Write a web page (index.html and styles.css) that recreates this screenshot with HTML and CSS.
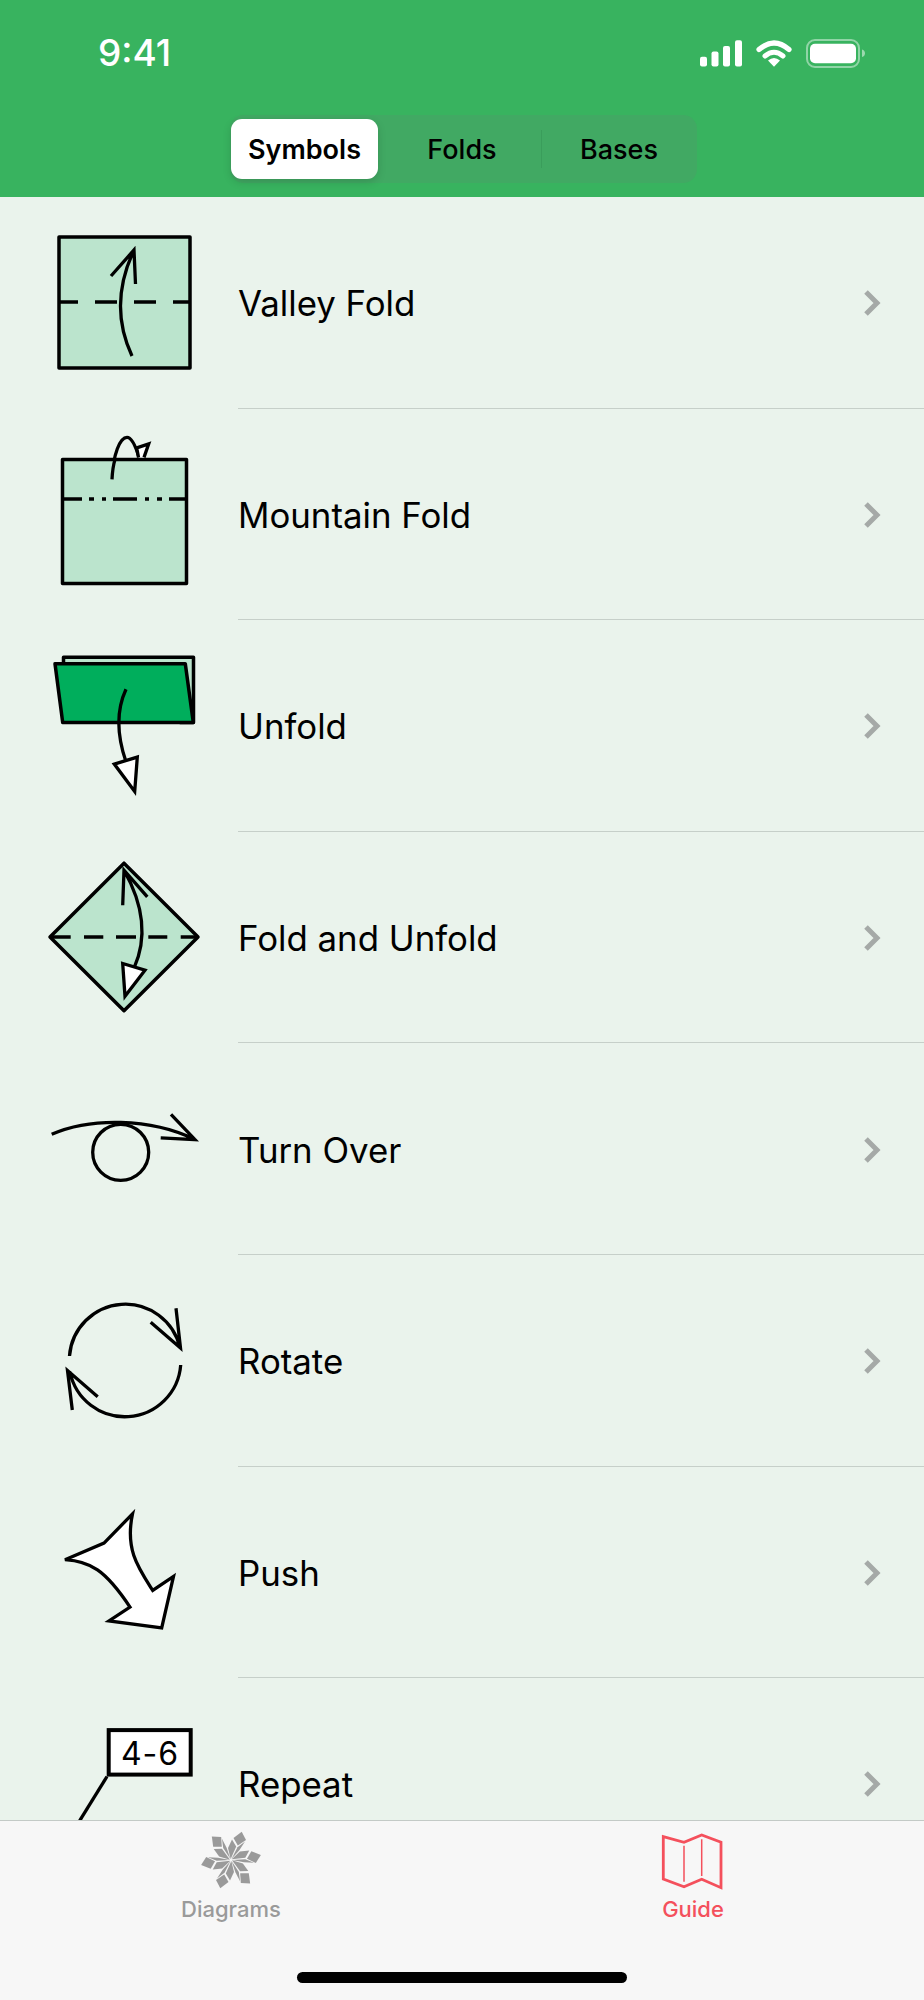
FILE: index.html
```html
<!DOCTYPE html>
<html lang="en">
<head>
    <meta charset="UTF-8">
    <meta name="viewport" content="width=device-width, initial-scale=1.0">
    <title>Guide</title>
    <link rel="stylesheet" href="styles.css">
</head>
<body>
    <div class="app">
        <header class="top">
            <div class="status">
                <span class="time">9:41</span>
                <svg class="status-icons" viewBox="700 34 165 34">
                    <rect x="700" y="55.7" width="7" height="9.8" rx="2" fill="#fff"/>
                    <rect x="711.5" y="50.5" width="7" height="15" rx="2" fill="#fff"/>
                    <rect x="723" y="45" width="7" height="20.5" rx="2" fill="#fff"/>
                    <rect x="735" y="39.3" width="7" height="26.2" rx="2" fill="#fff"/>
                    <path d="M759 48.5Q774 35.5 789 48.5" fill="none" stroke="#fff" stroke-width="5.2" stroke-linecap="round"/>
                    <path d="M765 55Q774 47.5 783 55" fill="none" stroke="#fff" stroke-width="5" stroke-linecap="round"/>
                    <path d="M768 59.5Q774 54.5 780 59.5L774 65.7Z" fill="#fff"/>
                    <rect x="807" y="39" width="52" height="27" rx="8" fill="none" stroke="#fff" stroke-opacity="0.45" stroke-width="2"/>
                    <rect x="810" y="42.7" width="46" height="19.5" rx="5" fill="#fff"/>
                    <path d="M862 48.5C864 49 865 50.5 865 52.2C865 54 864 55.5 862 56Z" fill="#fff" fill-opacity="0.5"/>
                </svg>
            </div>
            <nav class="segments">
                <a class="segment active">Symbols</a>
                <a class="segment folds">Folds</a>
                <a class="segment bases">Bases</a>
            </nav>
        </header>

        <main class="list">
            <div class="row">
                <svg class="icon" viewBox="0 0 238 211">
                    <rect class="sheet" x="59" y="40" width="131" height="131"/>
                    <path class="line" d="M59 105H78M95 105H117M134 105H156M173 105H190"/>
                    <path class="line thin" d="M132 159Q108 108 134 53M111 79L134 53L135.500 87"/>
                </svg>
                <div class="row-body"><span>Valley Fold</span><svg class="chevron" viewBox="0 0 18 28"><path d="M3 3L14 14L3 25"/></svg></div>
            </div>
            <div class="row">
                <svg class="icon" viewBox="0 -0.400 238 211">
                    <path class="line thin" d="M112 70C113 45 120 28 127 28C132 28 136 38 139 48"/>
                    <path class="tip" d="M138.500 48L136.700 38.500L148.700 34.500L144 48"/>
                    <rect class="sheet" x="62.500" y="50" width="124" height="124"/>
                    <path class="line" d="M61 89.500H82M89 89.500H94M102 89.500H106M113 89.500H137M145 89.500H149M157 89.500H162M169 89.500H187"/>
                    <path class="line thin" d="M112 70C112.500 60 113.500 55 115 50"/>
                </svg>
                <div class="row-body"><span>Mountain Fold</span><svg class="chevron" viewBox="0 0 18 28"><path d="M3 3L14 14L3 25"/></svg></div>
            </div>
            <div class="row">
                <svg class="icon" viewBox="0 -0.800 238 211">
                    <path class="sheet" d="M63.500 43V36.500H193.500V101.700H180V43Z"/>
                    <path class="sheet dark" d="M55 43H185.300L193.300 101.700H62.700Z"/>
                    <path class="line thin" d="M126 68.500C117 88 116 112 126 141"/>
                    <path class="tip" d="M114.300 143.300L137.300 136.300L134.700 170.700Z"/>
                </svg>
                <div class="row-body"><span>Unfold</span><svg class="chevron" viewBox="0 0 18 28"><path d="M3 3L14 14L3 25"/></svg></div>
            </div>
            <div class="row">
                <svg class="icon" viewBox="0 -1.200 238 211">
                    <path class="sheet" d="M124 30L198 103.700L124 177.500L50 103.700Z"/>
                    <path class="line" d="M50 103.700H70.700M84 103.700H103.300M116 103.700H136M148.300 103.700H167.300M180.700 103.700H198"/>
                    <path class="line thin" d="M124 37Q154 90 134 135M122.700 72L124 37L147.300 63.700"/>
                    <path class="tip" d="M122.700 130.300L145 137L125 163Z"/>
                </svg>
                <div class="row-body"><span>Fold and Unfold</span><svg class="chevron" viewBox="0 0 18 28"><path d="M3 3L14 14L3 25"/></svg></div>
            </div>
            <div class="row">
                <svg class="icon" viewBox="0 -1.600 238 211">
                    <circle class="line thin" cx="120.700" cy="107.700" r="28"/>
                    <path class="line thin" d="M51.700 89.700C90 73 150 73 195 95M171 69.700L195 95L160.700 93.300"/>
                </svg>
                <div class="row-body"><span>Turn Over</span><svg class="chevron" viewBox="0 0 18 28"><path d="M3 3L14 14L3 25"/></svg></div>
            </div>
            <div class="row">
                <svg class="icon" viewBox="0 -2 238 211">
                    <path class="line thin" d="M69.500 99A56 56 0 0 1 180 91M176 51.300L180.500 91L150.700 65.300"/>
                    <path class="line thin" d="M180.700 108A56 56 0 0 1 70 115M72.300 153L67.500 113.500L97.700 139.700"/>
                </svg>
                <div class="row-body"><span>Rotate</span><svg class="chevron" viewBox="0 0 18 28"><path d="M3 3L14 14L3 25"/></svg></div>
            </div>
            <div class="row">
                <svg class="icon" viewBox="0 -2.400 238 211">
                    <path class="tip" d="M132.500 44.500L104 73.700L65 90.300C90 92 105 100 130 137.700L109 151.500L161.700 158.500L173.500 107L152.700 121C138 98 125 80 132.500 44.500Z"/>
                </svg>
                <div class="row-body"><span>Push</span><svg class="chevron" viewBox="0 0 18 28"><path d="M3 3L14 14L3 25"/></svg></div>
            </div>
            <div class="row">
                <svg class="icon" viewBox="0 -2.800 238 211">
                    <path class="line thin" d="M107 95.700L79 141"/>
                    <rect class="tag" x="108.700" y="49.300" width="82" height="44.500"/>
                    <text class="tag-text" x="150" y="84">4-6</text>
                </svg>
                <div class="row-body"><span>Repeat</span><svg class="chevron" viewBox="0 0 18 28"><path d="M3 3L14 14L3 25"/></svg></div>
            </div>
        </main>

        <footer class="tabbar">
            <a class="tab">
                <svg class="tab-icon" viewBox="-32 -32 64 64">
                    <defs>
                        <g id="petal">
                            <path d="M-0.300 -1L-3 -12L1 -20.500L5.200 -13.500Z"/>
                            <path d="M2.500 -22L10.700 -28.300L15 -20L6.800 -14.500Z"/>
                            <path d="M0.500 -1L6.500 -12.800L14 -18.500L8.500 -10Z"/>
                        </g>
                    </defs>
                    <use href="#petal"/>
                    <use href="#petal" transform="rotate(60)"/>
                    <use href="#petal" transform="rotate(120)"/>
                    <use href="#petal" transform="rotate(180)"/>
                    <use href="#petal" transform="rotate(240)"/>
                    <use href="#petal" transform="rotate(300)"/>
                </svg>
                <span>Diagrams</span>
            </a>
            <a class="tab active">
                <svg class="tab-icon" viewBox="661 1828 64 64">
                    <path d="M663.300 1836.700L684 1842.300L701.700 1835L721 1842.300V1887.700L701.700 1879.300L684 1886.700L663.300 1879Z"/>
                    <path class="fold-line" d="M684 1845.700V1881.700M701.700 1839.300V1876"/>
                </svg>
                <span>Guide</span>
            </a>
            <div class="home-bar"></div>
        </footer>
    </div>
</body>
</html>
```

FILE: styles.css
```css
:root {
    --header-color: #38b35f;
    --list-color: #eaf3ec;
    --sheet-color: #bbe4cd;
    --tab-color: #f7f7f7;
    --guide-color: #f4505c;
    --grey-color: #9a9a9a;
}

* {
    box-sizing: border-box;
}

body {
    margin: 0;
    font-family: Inter, 'Liberation Sans', sans-serif;
    color: #000;
    overflow: hidden;
}

.app {
    height: 2000px;
    display: flex;
    flex-direction: column;
}

.top {
    background-color: var(--header-color);
    height: 197px;
    padding-top: 34px;
    flex: none;
}

.status {
    height: 36px;
    display: flex;
    justify-content: space-between;
    align-items: center;
    padding: 0 59px 0 98px;
}

.time {
    color: white;
    font-size: 37px;
    font-weight: 500;
}

.status-icons {
    width: 165px;
    height: 34px;
}

.segments {
    display: flex;
    width: 467px;
    height: 68px;
    margin: 45px 0 0 230px;
    padding-left: 1px;
    background-color: #41a963;
    border-radius: 14px;
    font-size: 27px;
    font-weight: 500;
}

.segment {
    display: flex;
    align-items: center;
    justify-content: center;
}

.segment.active {
    width: 147px;
    height: 60px;
    margin-top: 4px;
    background-color: white;
    border-radius: 11px;
    font-weight: 600;
    box-shadow: 0 3px 8px rgba(0, 0, 0, 0.15);
}

.segment.folds {
    width: 158px;
    margin-left: 5px;
}

.segment.bases {
    width: 156px;
    position: relative;
}

.segment.bases::before {
    content: '';
    position: absolute;
    left: 0;
    top: 15px;
    bottom: 15px;
    width: 1px;
    background-color: #3a9d5b;
}

.list {
    flex: 1;
    overflow: hidden;
    background-color: var(--list-color);
}

.row {
    display: flex;
    height: 211.6px;
}

.icon {
    flex: none;
    width: 238px;
    height: 211px;
}

.row-body {
    flex: 1;
    display: flex;
    align-items: center;
    justify-content: space-between;
    padding: 2px 43px 0 0;
    border-bottom: 1px solid #c6cfc9;
    font-size: 34.8px;
}

.chevron {
    width: 18px;
    height: 28px;
}

.chevron path {
    fill: none;
    stroke: #a5a9a7;
    stroke-width: 5;
}

.sheet {
    fill: var(--sheet-color);
    stroke: #000;
    stroke-width: 3.5;
    stroke-linejoin: round;
}

.sheet.dark {
    fill: #00ae5c;
}

.line {
    fill: none;
    stroke: #000;
    stroke-width: 3.5;
}

.line.thin {
    stroke-width: 3.3;
}

.tip {
    fill: white;
    stroke: #000;
    stroke-width: 3.3;
}

.tag {
    fill: white;
    stroke: #000;
    stroke-width: 4;
}

.tag-text {
    font-size: 32px;
    text-anchor: middle;
    letter-spacing: 1px;
}

.tabbar {
    position: relative;
    flex: none;
    height: 180px;
    display: flex;
    background-color: var(--tab-color);
    border-top: 1px solid #c3cac6;
}

.tab {
    flex: 1;
    padding-top: 7px;
    display: flex;
    flex-direction: column;
    align-items: center;
    font-size: 22px;
    font-weight: 500;
    color: var(--grey-color);
}

.tab.active {
    color: var(--guide-color);
}

.tab-icon {
    flex: none;
    width: 64px;
    height: 64px;
    fill: var(--grey-color);
    margin-bottom: 4px;
}

.tab.active .tab-icon {
    fill: none;
    stroke: var(--guide-color);
    stroke-width: 2.8;
}

.tab.active .fold-line {
    stroke-width: 1.5;
}

.home-bar {
    position: absolute;
    left: 297px;
    bottom: 17px;
    width: 330px;
    height: 11px;
    background-color: black;
    border-radius: 6px;
}
```
